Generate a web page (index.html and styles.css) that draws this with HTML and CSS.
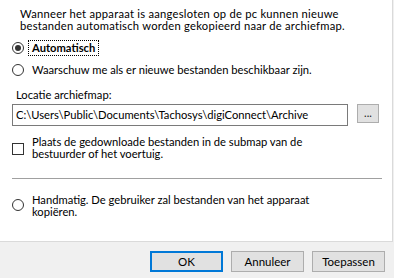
FILE: index.html
```html
<!DOCTYPE html>
<html lang="nl">
<head>
    <meta charset="UTF-8">
    <meta name="viewport" content="width=device-width, initial-scale=1.0">
    <title>Archief instellingen</title>
    <link rel="stylesheet" href="styles.css">
</head>
<body>
    <div class="panel">
        <p class="intro">Wanneer het apparaat is aangesloten op de pc kunnen nieuwe<br>bestanden automatisch worden gekopieerd naar de archiefmap.</p>

        <label class="option auto">
            <span class="radio checked"></span>
            <span class="focus">Automatisch</span>
        </label>

        <label class="option warn">
            <span class="radio"></span>
            <span>Waarschuw me als er nieuwe bestanden beschikbaar zijn.</span>
        </label>

        <div class="location">
            <div class="loc-label">Locatie archiefmap:</div>
            <div class="loc-row">
                <div class="path">C:\Users\Public\Documents\Tachosys\digiConnect\Archive</div>
                <button class="browse">...</button>
            </div>
        </div>

        <label class="option check-option">
            <span class="checkbox"></span>
            <span class="wrap">Plaats de gedownloade bestanden in de submap van de<br>bestuurder of het voertuig.</span>
        </label>

        <hr class="divider">

        <label class="option manual">
            <span class="radio"></span>
            <span class="wrap">Handmatig. De gebruiker zal bestanden van het apparaat<br>kopiëren.</span>
        </label>
    </div>

    <div class="footer">
        <button class="btn default">OK</button>
        <button class="btn">Annuleer</button>
        <button class="btn">Toepassen</button>
    </div>
</body>
</html>
```

FILE: styles.css
```css
body {
    margin: 0;
    background-color: #f0f0f0;
    font-family: Lato, "Noto Sans", sans-serif;
    font-size: 11.2px;
    line-height: 12px;
    color: #000;
}
p {
    margin: 0;
}
.panel {
    width: 393px;
    height: 242px;
    box-sizing: border-box;
    background-color: #fff;
    border-right: 1px solid #dadada;
    border-bottom: 1px solid #dadada;
    padding: 8px 0 0 12px;
}
.intro {
    padding-left: 8px;
    white-space: nowrap;
    letter-spacing: 0.25px;
}
.option {
    display: flex;
    align-items: center;
    gap: 8px;
}
.auto {
    margin-top: 10px;
}
.warn {
    margin-top: 10px;
}
.radio {
    flex: none;
    width: 12px;
    height: 12px;
    box-sizing: border-box;
    border: 1px solid #333;
    border-radius: 50%;
    display: flex;
    align-items: center;
    justify-content: center;
}
.radio.checked::after {
    content: "";
    width: 6px;
    height: 6px;
    border-radius: 50%;
    background-color: #333;
}
.focus {
    font-weight: bold;
    border: 1px dotted #000;
    padding: 1px 3px;
    margin: -2px 0 -2px -4px;
}
.location {
    margin-top: 13px;
}
.loc-label {
    padding-left: 4px;
}
.loc-row {
    display: flex;
    align-items: flex-start;
    gap: 9px;
    margin-top: 3px;
}
.path {
    width: 336px;
    height: 22px;
    box-sizing: border-box;
    border: 1px solid #7a7a7a;
    padding: 4px 3px 0 3px;
    white-space: nowrap;
    overflow: hidden;
}
.browse {
    width: 22px;
    height: 19px;
    padding: 0 0 2px 0;
    border: 1px solid #adadad;
    background-color: #e1e1e1;
    font-family: inherit;
    font-size: 11px;
    line-height: 12px;
    color: #222;
}
.check-option {
    align-items: flex-start;
    margin-top: 10px;
}
.checkbox {
    flex: none;
    width: 12px;
    height: 12px;
    box-sizing: border-box;
    border: 1px solid #333;
    margin-top: 7px;
}
.wrap {
    white-space: nowrap;
}
.divider {
    border: none;
    border-top: 1px solid #a0a0a0;
    margin: 18px 0 0 0;
    width: 370px;
}
.manual {
    align-items: flex-start;
    margin-top: 15px;
}
.manual .radio {
    margin-top: 5px;
}
.footer {
    display: flex;
    justify-content: flex-end;
    gap: 8px;
    padding: 9px 9px 0 0;
}
.btn {
    width: 73px;
    height: 21px;
    padding: 0;
    border: 1px solid #adadad;
    background-color: #e1e1e1;
    font-family: inherit;
    font-size: 11.5px;
    line-height: 12px;
    color: #000;
}
.btn.default {
    border: 2px solid #0078d7;
}
```
